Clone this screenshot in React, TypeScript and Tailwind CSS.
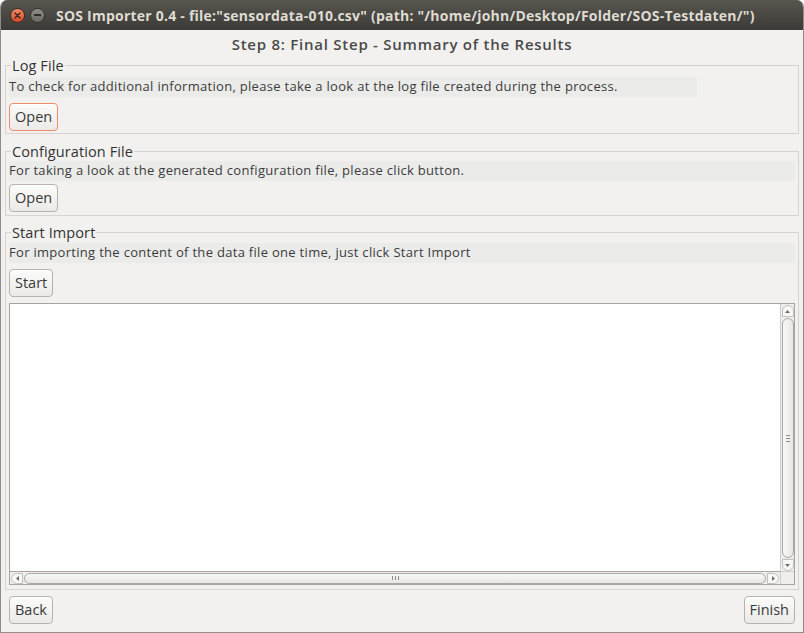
import React from 'react';

const ui = { fontFamily: '"Open Sans", "DejaVu Sans", sans-serif' };

function Button({ label, focused = false }: { label: string; focused?: boolean }) {
  return (
    <button
      className={
        'h-[28px] px-[5px] rounded-[4px] border text-[14.5px] text-[#3a3a3a] bg-gradient-to-b from-[#fbfbfa] to-[#ebeae8] shadow-[inset_0_1px_0_#ffffff] ' +
        (focused ? 'border-[#ee8d66]' : 'border-[#b6b3ae]')
      }
      style={ui}
    >
      {label}
    </button>
  );
}

function Legend({ children }: { children: React.ReactNode }) {
  return (
    <legend className="ml-[2px] px-[1px] text-[14.5px] leading-[17px] text-[#333333] tracking-[0.1px]">
      {children}
    </legend>
  );
}

function Band({ text, className = '' }: { text: string; className?: string }) {
  return (
    <div className={'h-[20px] flex items-center bg-[#ebebea] text-[13px] tracking-[0.3px] text-[#3c3c3c] whitespace-nowrap ' + className}>
      {text}
    </div>
  );
}

export default function App() {
  return (
    <div className="w-[804px] h-[633px] flex flex-col rounded-t-[7px] overflow-hidden bg-[#f2f1f0] border-x border-b border-[#8f8d89]" style={ui}>
      {/* Title bar */}
      <div className="h-[30px] shrink-0 flex items-center bg-gradient-to-b from-[#57564f] to-[#3b3a36] pl-[9px]">
        <div className="w-[15px] h-[15px] rounded-full bg-gradient-to-b from-[#f58b63] to-[#d8482a] border border-[#3a2a22] flex items-center justify-center">
          <svg width="7" height="7" viewBox="0 0 7 7">
            <path d="M1 1L6 6M6 1L1 6" stroke="#3b2a24" strokeWidth="1.5" strokeLinecap="round" />
          </svg>
        </div>
        <div className="ml-[5px] w-[15px] h-[15px] rounded-full bg-gradient-to-b from-[#8f8e89] to-[#6a6964] border border-[#33322e] flex items-center justify-center">
          <div className="w-[7px] h-[1.5px] bg-[#2e2d29]" />
        </div>
        <div className="ml-[11px] text-[14px] font-bold tracking-[0.23px] text-[#dfdbd2] whitespace-nowrap">
          SOS Importer 0.4 - file:&quot;sensordata-010.csv&quot; (path: &quot;/home/john/Desktop/Folder/SOS-Testdaten/&quot;)
        </div>
      </div>

      {/* Header */}
      <div className="h-[27px] shrink-0 flex items-center justify-center text-[15px] font-semibold tracking-[0.75px] text-[#4a4a48] pt-[1px]">
        Step 8: Final Step - Summary of the Results
      </div>

      <fieldset className="border border-[#d6d4d1] mx-[4px] px-[3px] pb-[2px]">
        <Legend>Log File</Legend>
        <Band
          text="To check for additional information, please take a look at the log file created during the process."
          className="mt-[3px] w-[688px]"
        />
        <div className="mt-[6px]">
          <Button label="Open" focused />
        </div>
      </fieldset>

      <fieldset className="border border-[#d6d4d1] mx-[4px] px-[3px] pb-[3px] mt-[9px]">
        <Legend>Configuration File</Legend>
        <Band text="For taking a look at the generated configuration file, please click button." className="mt-[1px]" />
        <div className="mt-[3px]">
          <Button label="Open" />
        </div>
      </fieldset>

      <fieldset className="border border-[#d6d4d1] mx-[4px] px-[3px] mt-[8px] flex-1 min-h-0 flex flex-col pb-[4px]">
        <Legend>Start Import</Legend>
        <Band text="For importing the content of the data file one time, just click Start Import" className="mt-[2px]" />
        <div className="mt-[6px]">
          <Button label="Start" />
        </div>
        {/* Text area with scrollbars */}
        <div className="mt-[6px] flex-1 min-h-0 grid grid-cols-[1fr_14px] grid-rows-[1fr_13px] border border-[#a8a5a0]">
          <div className="bg-white" />
          <div className="bg-[#efeeec] border-l border-[#cfcdca] flex flex-col items-center pt-[1px]">
            <div className="w-[12px] h-[12px] rounded-t-full border border-[#c2c0bc] bg-[#f7f7f6] flex items-center justify-center">
              <svg width="5" height="3" viewBox="0 0 5 3"><path d="M0 3L2.5 0L5 3Z" fill="#6e6d69" /></svg>
            </div>
            <div className="flex-1 w-[12px] my-[1px] rounded-[6px] border border-[#a9a7a3] bg-gradient-to-r from-[#f8f8f7] to-[#e7e6e4] flex items-center justify-center">
              <div className="flex flex-col gap-[2px]">
                <div className="w-[4px] h-[1px] bg-[#8d8b87]" />
                <div className="w-[4px] h-[1px] bg-[#8d8b87]" />
                <div className="w-[4px] h-[1px] bg-[#8d8b87]" />
              </div>
            </div>
            <div className="w-[12px] h-[12px] rounded-b-full border border-[#c2c0bc] bg-[#f7f7f6] flex items-center justify-center">
              <svg width="5" height="3" viewBox="0 0 5 3"><path d="M0 0L2.5 3L5 0Z" fill="#6e6d69" /></svg>
            </div>
          </div>
          <div className="bg-[#efeeec] border-t border-[#a8a5a0] flex items-center px-[1px]">
            <div className="w-[12px] h-[11px] rounded-l-full border border-[#c2c0bc] bg-[#f7f7f6] flex items-center justify-center">
              <svg width="3" height="5" viewBox="0 0 3 5"><path d="M3 0L0 2.5L3 5Z" fill="#6e6d69" /></svg>
            </div>
            <div className="flex-1 h-[11px] mx-[1px] rounded-[6px] border border-[#a9a7a3] bg-gradient-to-b from-[#f8f8f7] to-[#e7e6e4] flex items-center justify-center">
              <div className="flex gap-[2px]">
                <div className="w-[1px] h-[4px] bg-[#8d8b87]" />
                <div className="w-[1px] h-[4px] bg-[#8d8b87]" />
                <div className="w-[1px] h-[4px] bg-[#8d8b87]" />
              </div>
            </div>
            <div className="w-[12px] h-[11px] rounded-r-full border border-[#c2c0bc] bg-[#f7f7f6] flex items-center justify-center">
              <svg width="3" height="5" viewBox="0 0 3 5"><path d="M0 0L3 2.5L0 5Z" fill="#6e6d69" /></svg>
            </div>
          </div>
          <div className="bg-[#efeeec] border-t border-l border-[#cfcdca]" />
        </div>
      </fieldset>

      {/* Footer buttons */}
      <div className="h-[42px] shrink-0 flex items-center justify-between px-[8px] pb-[2px]">
        <Button label="Back" />
        <Button label="Finish" />
      </div>
    </div>
  );
}
